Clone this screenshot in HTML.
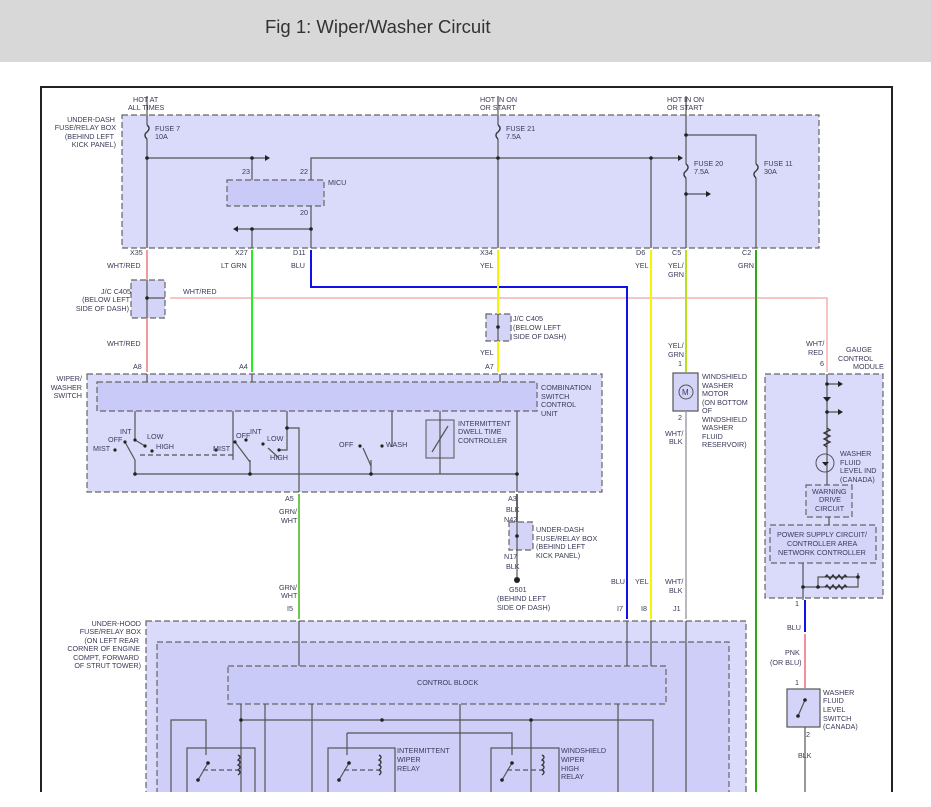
<!DOCTYPE html>
<html><head><meta charset="utf-8">
<style>
html,body{margin:0;padding:0;background:#fff;width:931px;height:807px;overflow:hidden}
svg{display:block}
text{font-family:"Liberation Sans",sans-serif;font-size:7.2px;fill:#3a3a5a}
.t{font-family:"Liberation Sans",sans-serif;font-size:18.5px;fill:#333}
</style></head><body>
<svg width="931" height="807" viewBox="0 0 931 807" xmlns="http://www.w3.org/2000/svg">
<rect x="0" y="0" width="931" height="62" fill="#d8d8d8"/>
<text class="t" x="265" y="33">Fig 1: Wiper/Washer Circuit</text>

<path d="M41 792 V87 H892 V792" fill="none" stroke="#222" stroke-width="2"/>

<g stroke="#666" stroke-dasharray="6,3" stroke-width="1.2">
<rect x="122" y="115" width="697" height="133" fill="#dadafa"/>
<rect x="227" y="180" width="97" height="26" fill="#cacaf8"/>
<rect x="131" y="280" width="34" height="38" fill="#d4d4f8"/>
<rect x="486" y="314" width="25" height="27" fill="#d4d4f8"/>
<rect x="87" y="374" width="515" height="118" fill="#dadafa"/>
<rect x="97" y="382" width="440" height="29" fill="#cacaf8"/>
<rect x="509" y="522" width="24" height="28" fill="#d4d4f8"/>
<rect x="765" y="374" width="118" height="224" fill="#dadafa"/>
<rect x="806" y="485" width="46" height="32" fill="#d4d4f8"/>
<rect x="770" y="525" width="106" height="38" fill="#d4d4f8"/>
<rect x="146" y="621" width="600" height="190" fill="#dadafa"/>
<rect x="157" y="642" width="572" height="170" fill="#cecef8"/>
<rect x="228" y="666" width="438" height="38" fill="#cacaf8"/>
</g>
<rect x="673" y="373" width="25" height="38" fill="#d4d4f8" stroke="#555" stroke-width="1.2"/>
<rect x="787" y="689" width="33" height="38" fill="#d4d4f8" stroke="#555" stroke-width="1.2"/>
<rect x="426" y="420" width="28" height="38" fill="#d4d4f8" stroke="#555" stroke-width="1"/>

<g stroke="#555" stroke-width="1.2" fill="none">
<path d="M147 96 V248 M147 158 H265 M252 158 V180 M311 180 V158 H678 M311 206 V248 M238 229 H311 M252 229 V248"/>
<path d="M498 96 V248 M651 158 V248"/>
<path d="M686 96 V248 M686 135 H756 V248 M686 194 H706"/>
<path d="M147 280 V318 M147 298 H165"/>
<path d="M498 314 V341"/>
<path d="M147 374 V382 M252 374 V382 M500 374 V382"/>
<path d="M135 411 V440 M233 411 V460 M287 411 V450 H279 M287 428 H299 V492 M392 411 V447 M440 411 V474 M517 411 V492"/>
<path d="M135 474 H517 M135 474 V460 M250 474 V460 M371 474 V460"/>
<path d="M125 442 L135 460 M235 442 L250 462 M363 448 L371 466 M268 448 L279 458 M135 440 L145 446"/>
<path d="M140 455 H235" stroke-dasharray="5,3"/>
<path d="M517 522 V580"/>
<path d="M827 374 V485 M827 384 H838 M827 412 H838 M829 517 V525 M803 563 V600 M803 587 H858 V573 M818 587 V577 H858"/>
<path d="M299 621 V666 M627 621 V666 M651 621 V666 M686 621 V792"/>
<path d="M241 704 V792 M265 704 V792 M312 704 V792 M460 704 V792 M618 704 V792"/>
<path d="M171 792 V720 H206 V755 M241 720 H653 V792 M347 733 H512 V755 M347 733 V755 M531 720 V792"/>
<rect x="187" y="748" width="68" height="50"/>
<rect x="328" y="748" width="67" height="50"/>
<rect x="491" y="748" width="68" height="50"/>
<path d="M198 780 L208 763 M339 780 L349 763 M502 780 L512 763"/>
<path d="M203 770 H238 M344 770 H379 M507 770 H542" stroke-dasharray="5,3"/>
<path d="M805 727 V792 M798 716 L805 700"/>
<path d="M432 452 L448 426"/>
</g>
<!-- fuses -->
<g fill="#f0f0ff" stroke="#333" stroke-width="1.3">
<path d="M147 125 q4 3 0 7 q-4 3 0 7" />
<path d="M498 125 q4 3 0 7 q-4 3 0 7" />
<path d="M686 164 q4 3 0 7 q-4 3 0 7" />
<path d="M756 164 q4 3 0 7 q-4 3 0 7" />
</g>
<rect x="145.5" y="125" width="3" height="14" fill="#dadafa"/>
<rect x="496.5" y="125" width="3" height="14" fill="#dadafa"/>
<rect x="684.5" y="164" width="3" height="14" fill="#dadafa"/>
<rect x="754.5" y="164" width="3" height="14" fill="#dadafa"/>
<g fill="none" stroke="#333" stroke-width="1.3">
<path d="M147 125 q4 3 0 7 q-4 3 0 7"/><path d="M498 125 q4 3 0 7 q-4 3 0 7"/>
<path d="M686 164 q4 3 0 7 q-4 3 0 7"/><path d="M756 164 q4 3 0 7 q-4 3 0 7"/>
<!-- resistors -->
<path d="M827 428 l3 2 l-6 3 l6 3 l-6 3 l6 3 l-6 3 l3 2"/>
<path d="M825 577 l2 -2 l3 4 l3 -4 l3 4 l3 -4 l3 4 l3 -4 l2 2"/>
<path d="M825 587 l2 -2 l3 4 l3 -4 l3 4 l3 -4 l3 4 l3 -4 l2 2"/>
<!-- coils -->
<path d="M238 755 q4 2 0 5 q4 2 0 5 q4 2 0 5 q4 2 0 5"/>
<path d="M379 755 q4 2 0 5 q4 2 0 5 q4 2 0 5 q4 2 0 5"/>
<path d="M542 755 q4 2 0 5 q4 2 0 5 q4 2 0 5 q4 2 0 5"/>
</g>
<g fill="#222">
<path d="M823 397 h8 l-4 5 z"/><path d="M822 462 h7 l-3.5 4 z"/>
<path d="M265 155 l5 3 l-5 3z"/><path d="M678 155 l5 3 l-5 3z"/><path d="M706 191 l5 3 l-5 3z"/><path d="M238 226 l-5 3 l5 3z"/>
<path d="M838 381 l5 3 l-5 3z"/><path d="M838 409 l5 3 l-5 3z"/>
<circle cx="147" cy="158" r="1.8"/><circle cx="252" cy="158" r="1.8"/><circle cx="252" cy="229" r="1.8"/><circle cx="311" cy="229" r="1.8"/>
<circle cx="498" cy="158" r="1.8"/><circle cx="651" cy="158" r="1.8"/><circle cx="686" cy="135" r="1.8"/><circle cx="686" cy="194" r="1.8"/>
<circle cx="147" cy="298" r="1.8"/><circle cx="498" cy="327" r="1.8"/><circle cx="517" cy="536" r="1.8"/>
<circle cx="135" cy="474" r="1.8"/><circle cx="250" cy="474" r="1.8"/><circle cx="371" cy="474" r="1.8"/><circle cx="517" cy="474" r="1.8"/><circle cx="287" cy="428" r="1.8"/>
<circle cx="115" cy="450" r="1.6"/><circle cx="125" cy="442" r="1.6"/><circle cx="135" cy="440" r="1.6"/><circle cx="145" cy="446" r="1.6"/><circle cx="152" cy="451" r="1.6"/>
<circle cx="216" cy="450" r="1.6"/><circle cx="235" cy="442" r="1.6"/><circle cx="246" cy="440" r="1.6"/><circle cx="263" cy="444" r="1.6"/><circle cx="279" cy="450" r="1.6"/>
<circle cx="360" cy="446" r="1.6"/><circle cx="382" cy="446" r="1.6"/>
<circle cx="827" cy="384" r="1.8"/><circle cx="827" cy="412" r="1.8"/><circle cx="803" cy="587" r="1.8"/><circle cx="818" cy="587" r="1.8"/><circle cx="858" cy="577" r="1.8"/>
<circle cx="241" cy="720" r="1.8"/><circle cx="382" cy="720" r="1.8"/><circle cx="531" cy="720" r="1.8"/>
<circle cx="208" cy="763" r="1.8"/><circle cx="198" cy="780" r="1.8"/><circle cx="349" cy="763" r="1.8"/><circle cx="339" cy="780" r="1.8"/><circle cx="512" cy="763" r="1.8"/><circle cx="502" cy="780" r="1.8"/>
<circle cx="805" cy="700" r="1.8"/><circle cx="798" cy="716" r="1.8"/>
<circle cx="517" cy="580" r="3"/>
</g>
<circle cx="686" cy="392" r="7" fill="none" stroke="#555"/><text x="682" y="395" style="font-size:8px">M</text>
<circle cx="825" cy="463" r="9" fill="none" stroke="#555"/>

<g fill="none" stroke-width="2">
<path d="M147 250 V280 M147 318 V372" stroke="#f09a9a"/>
<path d="M170 298 H827 V372" stroke="#f4b0b0" stroke-width="1.5"/>
<path d="M252 250 V372" stroke="#22ee22"/>
<path d="M311 250 V287 H627 V619" stroke="#1010ee"/>
<path d="M498 250 V314 M498 341 V372" stroke="#f5f500"/>
<path d="M651 250 V619" stroke="#f5f500"/>
<path d="M686 250 V372" stroke="#b8e020"/>
<path d="M756 250 V792" stroke="#30a818"/>
<path d="M686 411 V619" stroke="#a0a0a8" stroke-width="1.5"/>
<path d="M299 494 V619" stroke="#70c850"/>
<path d="M517 494 V522" stroke="#666"/>
<path d="M805 600 V632" stroke="#1010ee"/>
<path d="M805 634 V688" stroke="#f090a0"/>
</g>

<text x="133" y="102">HOT AT</text><text x="128" y="110">ALL TIMES</text>
<text x="480" y="102">HOT IN ON</text><text x="480" y="110">OR START</text>
<text x="667" y="102">HOT IN ON</text><text x="667" y="110">OR START</text>
<g text-anchor="end"><text x="115" y="122">UNDER-DASH</text><text x="116" y="130">FUSE/RELAY BOX</text><text x="114" y="139">(BEHIND LEFT</text><text x="116" y="147">KICK PANEL)</text></g>
<text x="155" y="131">FUSE 7</text><text x="155" y="139">10A</text>
<text x="506" y="131">FUSE 21</text><text x="506" y="139">7.5A</text>
<text x="694" y="166">FUSE 20</text><text x="694" y="174">7.5A</text>
<text x="764" y="166">FUSE 11</text><text x="764" y="174">30A</text>
<text x="242" y="174">23</text><text x="300" y="174">22</text><text x="328" y="185">MICU</text><text x="300" y="215">20</text>
<text x="130" y="255">X35</text><text x="235" y="255">X27</text><text x="293" y="255">D11</text><text x="480" y="255">X34</text>
<text x="636" y="255">D6</text><text x="672" y="255">C5</text><text x="742" y="255">C2</text>
<text x="107" y="268">WHT/RED</text><text x="221" y="268">LT GRN</text><text x="291" y="268">BLU</text><text x="480" y="268">YEL</text>
<text x="635" y="268">YEL</text><text x="668" y="268">YEL/</text><text x="668" y="277">GRN</text><text x="738" y="268">GRN</text>
<g text-anchor="end"><text x="131" y="294">J/C C405</text><text x="130" y="302">(BELOW LEFT</text><text x="129" y="311">SIDE OF DASH)</text></g>
<text x="183" y="294">WHT/RED</text>
<text x="513" y="321">J/C C405</text><text x="513" y="330">(BELOW LEFT</text><text x="513" y="339">SIDE OF DASH)</text>
<text x="107" y="346">WHT/RED</text><text x="480" y="355">YEL</text>
<text x="668" y="348">YEL/</text><text x="668" y="357">GRN</text><text x="678" y="366">1</text>
<text x="806" y="346">WHT/</text><text x="808" y="355">RED</text><text x="820" y="366">6</text>
<text x="846" y="352">GAUGE</text><text x="838" y="361">CONTROL</text><text x="853" y="369">MODULE</text>
<text x="133" y="369">A8</text><text x="239" y="369">A4</text><text x="485" y="369">A7</text>
<g text-anchor="end"><text x="82" y="381">WIPER/</text><text x="82" y="390">WASHER</text><text x="82" y="398">SWITCH</text></g>
<text x="541" y="390">COMBINATION</text><text x="541" y="399">SWITCH</text><text x="541" y="407">CONTROL</text><text x="541" y="416">UNIT</text>
<text x="458" y="426">INTERMITTENT</text><text x="458" y="434">DWELL TIME</text><text x="458" y="443">CONTROLLER</text>
<text x="702" y="379">WINDSHIELD</text><text x="702" y="388">WASHER</text><text x="702" y="396">MOTOR</text><text x="702" y="405">(ON BOTTOM</text><text x="702" y="413">OF</text><text x="702" y="422">WINDSHIELD</text><text x="702" y="430">WASHER</text><text x="702" y="439">FLUID</text><text x="702" y="447">RESERVOIR)</text>
<text x="678" y="420">2</text><text x="665" y="436">WHT/</text><text x="669" y="444">BLK</text>
<text x="120" y="434">INT</text><text x="108" y="442">OFF</text><text x="147" y="439">LOW</text><text x="93" y="451">MIST</text><text x="156" y="449">HIGH</text>
<text x="250" y="434">INT</text><text x="236" y="438">OFF</text><text x="267" y="441">LOW</text><text x="213" y="451">MIST</text><text x="270" y="460">HIGH</text>
<text x="339" y="447">OFF</text><text x="386" y="447">WASH</text>
<text x="840" y="456">WASHER</text><text x="840" y="465">FLUID</text><text x="840" y="473">LEVEL IND</text><text x="840" y="482">(CANADA)</text>
<text x="812" y="494">WARNING</text><text x="819" y="502">DRIVE</text><text x="815" y="511">CIRCUIT</text>
<text x="777" y="537">POWER SUPPLY CIRCUIT/</text><text x="787" y="546">CONTROLLER AREA</text><text x="778" y="555">NETWORK CONTROLLER</text>
<text x="285" y="501">A5</text><text x="508" y="501">A3</text>
<text x="279" y="514">GRN/</text><text x="281" y="523">WHT</text><text x="506" y="512">BLK</text><text x="504" y="522">N42</text>
<text x="536" y="532">UNDER-DASH</text><text x="536" y="541">FUSE/RELAY BOX</text><text x="536" y="549">(BEHIND LEFT</text><text x="536" y="558">KICK PANEL)</text>
<text x="504" y="559">N17</text><text x="506" y="569">BLK</text>
<text x="509" y="592">G501</text><text x="497" y="601">(BEHIND LEFT</text><text x="497" y="610">SIDE OF DASH)</text>
<text x="279" y="590">GRN/</text><text x="281" y="598">WHT</text>
<text x="611" y="584">BLU</text><text x="635" y="584">YEL</text><text x="665" y="584">WHT/</text><text x="669" y="593">BLK</text>
<text x="795" y="606">1</text><text x="787" y="630">BLU</text><text x="785" y="655">PNK</text><text x="770" y="665">(OR BLU)</text><text x="795" y="685">1</text>
<text x="823" y="695">WASHER</text><text x="823" y="703">FLUID</text><text x="823" y="712">LEVEL</text><text x="823" y="721">SWITCH</text><text x="823" y="729">(CANADA)</text>
<text x="806" y="737">2</text><text x="798" y="758">BLK</text>
<text x="287" y="611">I5</text><text x="617" y="611">I7</text><text x="641" y="611">I8</text><text x="673" y="611">J1</text>
<g text-anchor="end"><text x="141" y="626">UNDER-HOOD</text><text x="141" y="634">FUSE/RELAY BOX</text><text x="139" y="643">(ON LEFT REAR</text><text x="140" y="651">CORNER OF ENGINE</text><text x="139" y="660">COMPT, FORWARD</text><text x="141" y="668">OF STRUT TOWER)</text></g>
<text x="417" y="685">CONTROL BLOCK</text>
<text x="397" y="753">INTERMITTENT</text><text x="397" y="762">WIPER</text><text x="397" y="771">RELAY</text>
<text x="561" y="753">WINDSHIELD</text><text x="561" y="762">WIPER</text><text x="561" y="771">HIGH</text><text x="561" y="779">RELAY</text>
<rect x="0" y="792" width="931" height="15" fill="#fff"/>
</svg>
</body></html>
